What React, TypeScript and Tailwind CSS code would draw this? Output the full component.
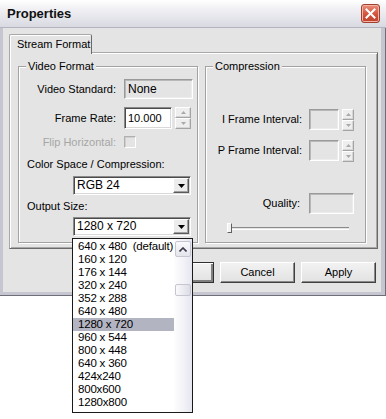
import React from "react";

const sunken =
  "border border-t-[#8a8a8a] border-l-[#8a8a8a] border-b-white border-r-white shadow-[inset_1px_1px_0_#4a4a4a,inset_-1px_-1px_0_#d8d8d8]";
const sunkenDis =
  "border border-t-[#9a9a9a] border-l-[#9a9a9a] border-b-white border-r-white shadow-[inset_1px_1px_0_#b8b8b8,inset_-1px_-1px_0_#ececec]";

function SpinBtn({ dir, w }: { dir: "up" | "down"; w: string }) {
  return (
    <div
      className={`${w} h-[11px] bg-[#eeeeee] border border-t-white border-l-white border-b-[#a4a4a4] border-r-[#a4a4a4] shadow-[inset_-1px_-1px_0_#d6d6d6] flex items-center justify-center`}
    >
      <svg width="5" height="3" viewBox="0 0 5 3">
        {dir === "up" ? (
          <path d="M0 3 L2.5 0 L5 3Z" fill="#a9a9a9" />
        ) : (
          <path d="M0 0 L2.5 3 L5 0Z" fill="#a9a9a9" />
        )}
      </svg>
    </div>
  );
}

function Spinner({ w }: { w: string }) {
  return (
    <div className="flex flex-col">
      <SpinBtn dir="up" w={w} />
      <SpinBtn dir="down" w={w} />
    </div>
  );
}

function Combo({ value }: { value: string }) {
  return (
    <div className={`w-[118px] h-[19px] bg-white flex items-center ${sunken}`}>
      <span className="flex-1 pl-[3px] leading-[13px] text-[12px]">{value}</span>
      <div className="w-[16px] h-[15px] mr-[1px] bg-[#ececec] border border-t-white border-l-white border-b-[#5a5a5a] border-r-[#5a5a5a] shadow-[inset_-1px_-1px_0_#a0a0a0] flex items-center justify-center">
        <svg width="7" height="4" viewBox="0 0 7 4">
          <path d="M0 0 L3.5 4 L7 0Z" fill="#000" />
        </svg>
      </div>
    </div>
  );
}

function Group({
  title,
  className,
  children,
}: {
  title: string;
  className: string;
  children: React.ReactNode;
}) {
  return (
    <div
      className={`relative h-[177px] border border-[#a2a2a2] shadow-[1px_1px_0_#ffffff,inset_1px_1px_0_#ffffff] ${className}`}
    >
      <span className="absolute left-[7px] -top-[7px] px-[2px] bg-[#e4e4e4] leading-[13px]">
        {title}
      </span>
      {children}
    </div>
  );
}

function Button({ label, def }: { label: string; def?: boolean }) {
  return (
    <div
      className={`w-[75px] h-[21px] flex items-center justify-center bg-[linear-gradient(to_bottom,#f2f2f2,#e2e2e2)] border ${
        def
          ? "border-[#303030] shadow-[inset_1px_1px_0_#fff,inset_-2px_-2px_0_#808080]"
          : "border-t-white border-l-white border-b-[#404040] border-r-[#404040] shadow-[inset_-1px_-1px_0_#8a8a8a]"
      }`}
    >
      {label}
    </div>
  );
}

const sizes = [
  "640 x 480  (default)",
  "160 x 120",
  "176 x 144",
  "320 x 240",
  "352 x 288",
  "640 x 480",
  "1280 x 720",
  "960 x 544",
  "800 x 448",
  "640 x 360",
  "424x240",
  "800x600",
  "1280x800",
];

export default function App() {
  return (
    <div className="relative w-[386px] h-[419px] bg-white text-[11px] text-black font-['Liberation_Sans',Arial,sans-serif] overflow-hidden">
      {/* Dialog */}
      <div className="w-[386px] h-[296px] flex flex-col bg-[#c6c6d0] shadow-[inset_-1px_-1px_0_#6e6e78]">
        {/* Title bar */}
        <div className="h-[28px] flex items-center justify-between pl-[7px] pr-[6px] bg-[linear-gradient(to_bottom,#ffffff,#ececf1_45%,#d9d9e2)] border-b border-[#b4b4c0]">
          <span className="text-[13px] font-bold leading-[15px] text-[#111]">Properties</span>
          <div className="w-[19px] h-[19px] rounded-[3px] border border-[#a0402e] bg-[linear-gradient(to_bottom,#ea8f7c,#d0533c_55%,#c0412b)] shadow-[inset_0_0_0_1px_#f3b3a6] flex items-center justify-center">
            <svg width="11" height="11" viewBox="0 0 11 11">
              <path d="M1.5 1.5 L9.5 9.5 M9.5 1.5 L1.5 9.5" stroke="#fff" strokeWidth="2" strokeLinecap="square" />
            </svg>
          </div>
        </div>
        {/* Body */}
        <div className="flex-1 ml-[3px] mr-[5px] mb-[4px] bg-[#e4e4e4] flex flex-col">
          {/* Tab header */}
          <div className="mt-[6px] ml-[6px] flex">
            <div className="relative z-10 w-[83px] h-[20px] -mb-[1px] bg-[#e4e4e4] border-t border-l border-r border-t-[#a8a8a8] border-l-[#a8a8a8] border-r-[#6a6a6a] shadow-[inset_1px_1px_0_#fff] rounded-t-[2px] pl-[7px] flex items-center">
              <span className="leading-[13px]">Stream Format</span>
            </div>
          </div>
          {/* Tab panel */}
          <div className="ml-[6px] w-[369px] h-[197px] -mt-[1px] border border-t-[#a8a8a8] border-l-[#a8a8a8] border-b-[#6a6a6a] border-r-[#6a6a6a] shadow-[inset_1px_1px_0_#fff,inset_-1px_-1px_0_#a8a8a8] flex pt-[13px] pl-[8px]">
            {/* Video Format */}
            <Group title="Video Format" className="w-[180px]">
              <div className="flex flex-col pt-[12px]">
                <div className="flex items-center h-[20px]">
                  <span className="w-[97px] text-right leading-[13px]">Video Standard:</span>
                  <div className={`ml-[8px] w-[69px] h-[20px] flex items-center pl-[3px] ${sunkenDis}`}>
                    <span className="leading-[13px] text-[12px]">None</span>
                  </div>
                </div>
                <div className="flex items-center h-[22px] mt-[8px]">
                  <span className="w-[97px] text-right leading-[13px]">Frame Rate:</span>
                  <div className={`ml-[8px] w-[48px] h-[22px] bg-white flex items-center pl-[3px] ${sunken}`}>
                    <span className="leading-[13px] text-[11px]">10.000</span>
                  </div>
                  <div className="ml-[3px]">
                    <Spinner w="w-[16px]" />
                  </div>
                </div>
                <div className="flex items-center h-[12px] mt-[7px]">
                  <span className="w-[97px] text-right leading-[13px] text-[#a6a6a6]">Flip Horizontal:</span>
                  <div className="ml-[8px] w-[12px] h-[12px] border border-t-[#b0b0b0] border-l-[#b0b0b0] border-b-white border-r-white shadow-[inset_1px_1px_0_#cfcfcf]" />
                </div>
                <span className="mt-[10px] ml-[8px] leading-[13px]">Color Space / Compression:</span>
                <div className="mt-[5px] ml-[54px]">
                  <Combo value="RGB 24" />
                </div>
                <span className="mt-[5px] ml-[8px] leading-[13px]">Output Size:</span>
                <div className="mt-[4px] ml-[54px]">
                  <Combo value="1280 x 720" />
                </div>
              </div>
            </Group>
            {/* Compression */}
            <Group title="Compression" className="w-[161px] ml-[7px]">
              <div className="flex flex-col pt-[41px]">
                <div className="flex items-center h-[23px]">
                  <span className="w-[96px] text-right leading-[13px]">I Frame Interval:</span>
                  <div className={`ml-[7px] w-[30px] h-[21px] ${sunkenDis}`} />
                  <div className="ml-[3px]">
                    <Spinner w="w-[12px]" />
                  </div>
                </div>
                <div className="flex items-center h-[23px] mt-[8px]">
                  <span className="w-[96px] text-right leading-[13px]">P Frame Interval:</span>
                  <div className={`ml-[7px] w-[30px] h-[21px] ${sunkenDis}`} />
                  <div className="ml-[3px]">
                    <Spinner w="w-[12px]" />
                  </div>
                </div>
                <div className="flex items-center h-[21px] mt-[31px]">
                  <span className="w-[94px] text-right leading-[13px]">Quality:</span>
                  <div className={`ml-[9px] w-[45px] h-[21px] ${sunkenDis}`} />
                </div>
                <div className="relative mt-[9px] ml-[21px] w-[122px] h-[10px] flex items-center">
                  <div className="w-full h-[3px] border-t border-[#8a8a8a] border-b border-b-white" />
                  <div className="absolute left-0 top-0 w-[5px] h-[10px] bg-[#f2f2f2] border border-t-white border-l-white border-b-[#606060] border-r-[#606060]" />
                </div>
              </div>
            </Group>
          </div>
          {/* Buttons */}
          <div className="mt-[13px] flex justify-end gap-[6px] pr-[5px]">
            <Button label="OK" def />
            <Button label="Cancel" />
            <Button label="Apply" />
          </div>
        </div>
      </div>

      {/* Dropdown list popup */}
      <div className="absolute left-[72px] top-[238px] w-[121px] h-[175px] bg-white border border-[#1a1a1a] flex">
        <div className="w-[101px] flex flex-col pt-[1px]">
          {sizes.map((s) => (
            <div
              key={s}
              className={`h-[13px] flex items-center pl-[5px] whitespace-pre leading-[13px] text-[11.5px] tracking-[-0.2px] ${
                s === "1280 x 720" ? "bg-[#b3b4c1]" : ""
              }`}
            >
              {s}
            </div>
          ))}
        </div>
        <div className="w-[18px] h-full bg-[linear-gradient(to_right,#fdfdfd,#f3f3f8_50%,#e6e6f0)] flex flex-col items-center pt-[2px]">
          <div className="w-[16px] h-[16px] rounded-[2px] border border-[#c6c6d0] bg-[linear-gradient(to_bottom,#fbfbfd,#e4e4ec)] flex items-center justify-center">
            <svg width="8" height="5" viewBox="0 0 8 5">
              <path d="M0.5 4.5 L4 1 L7.5 4.5" stroke="#3a3a4a" strokeWidth="1.6" fill="none" />
            </svg>
          </div>
          <div className="mt-[27px] w-[16px] h-[12px] rounded-[2px] border border-[#c6c6d0] bg-[linear-gradient(to_right,#fafafc,#dcdce6)]" />
        </div>
      </div>
    </div>
  );
}
